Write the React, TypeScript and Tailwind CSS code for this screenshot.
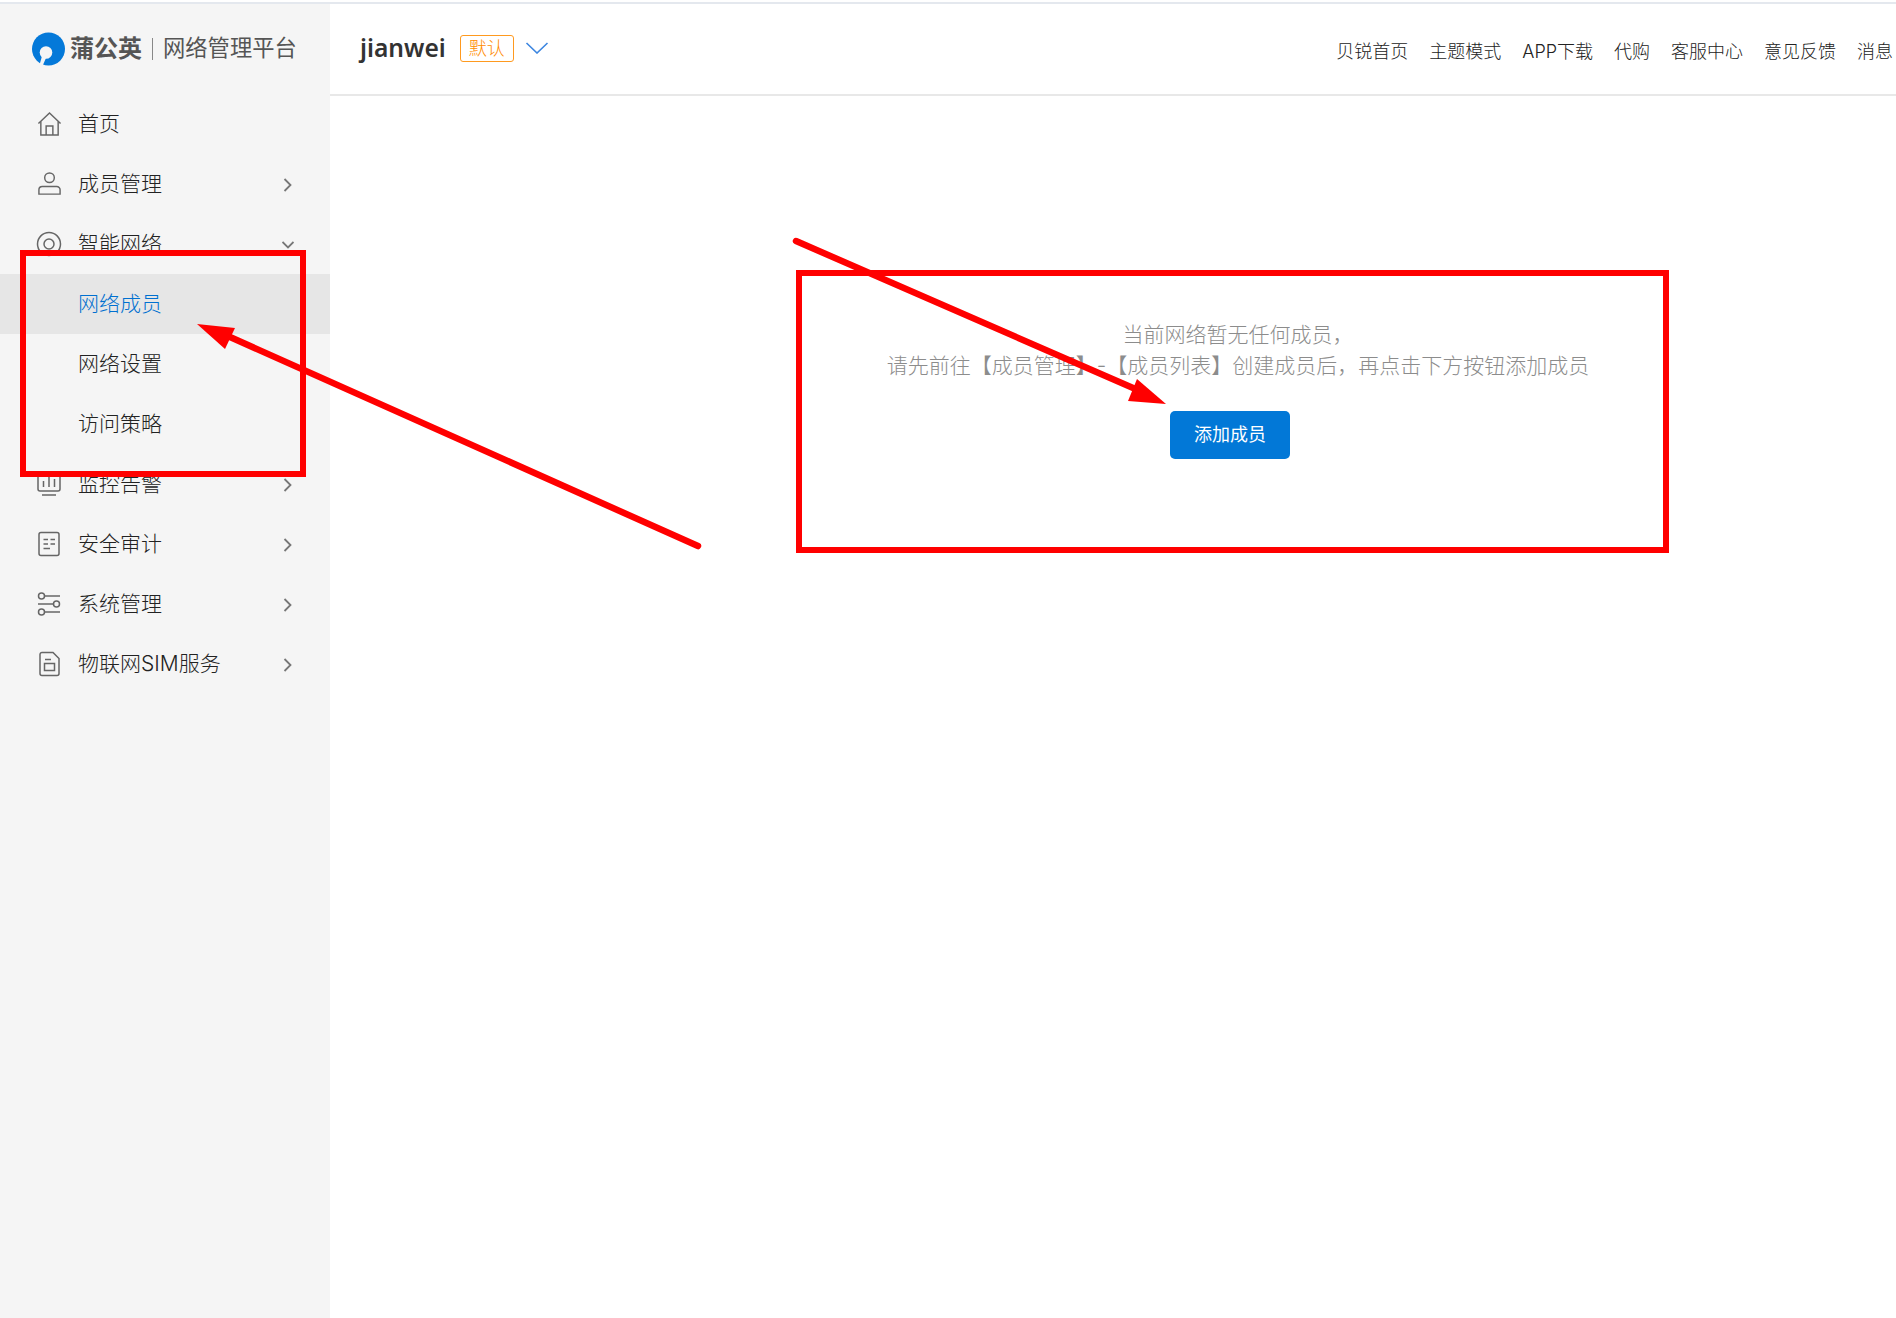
import React from "react";

const FONT = "font-['Inter','Noto_Sans_CJK_SC','Noto_Sans',sans-serif]";

function Chevron({ down }: { down?: boolean }) {
  return (
    <svg width="12" height="16" viewBox="0 0 12 16" fill="none" stroke="#777" strokeWidth="1.8" className="shrink-0 mt-[2px]">
      {down ? <path d="M0.5 5 L6 10.5 L11.5 5" /> : <path d="M2.5 2 L8.5 8 L2.5 14" />}
    </svg>
  );
}

const stroke = { fill: "none", stroke: "#666", strokeWidth: 1.5 };

const icons: Record<string, React.ReactNode> = {
  home: (
    <svg width="25" height="26" viewBox="0 0 26 26" {...stroke}>
      <path d="M1.5 12.5 L13 1.5 L24.5 12.5" />
      <path d="M4 10.5 V24.5 H22 V10.5" />
      <path d="M9.5 24.5 V15 H16.5 V24.5" />
    </svg>
  ),
  user: (
    <svg width="25" height="26" viewBox="0 0 26 26" {...stroke}>
      <circle cx="13" cy="6.5" r="5" />
      <path d="M5.5 15.5 H20.5 A3.5 3.5 0 0 1 24 19 V23.5 H2 V19 A3.5 3.5 0 0 1 5.5 15.5 Z" />
    </svg>
  ),
  net: (
    <svg width="26" height="26" viewBox="0 0 26 26" {...stroke}>
      <circle cx="13" cy="13" r="11.5" />
      <circle cx="13" cy="13" r="5" />
    </svg>
  ),
  monitor: (
    <svg width="26" height="26" viewBox="0 0 26 26" {...stroke}>
      <path d="M2 2 V18 A2 2 0 0 0 4 20 H22 A2 2 0 0 0 24 18 V2 Z" />
      <path d="M7.5 10 V16 M13 6 V16 M18.5 8 V16 M6 24 H20" />
    </svg>
  ),
  audit: (
    <svg width="24" height="26" viewBox="0 0 24 26" {...stroke}>
      <rect x="2" y="1.5" width="20" height="23" rx="2" />
      <path d="M6.5 8.5 H11 M13.5 8.5 H18 M6.5 13 H11 M13.5 13 H18 M6.5 17.5 H13" />
    </svg>
  ),
  system: (
    <svg width="24" height="26" viewBox="0 0 24 26" {...stroke}>
      <circle cx="4.5" cy="5" r="3" />
      <path d="M8 5 H23" />
      <path d="M1 13 H16" />
      <circle cx="19.5" cy="13" r="3" />
      <circle cx="4.5" cy="21" r="3" />
      <path d="M8 21 H23" />
    </svg>
  ),
  sim: (
    <svg width="24" height="26" viewBox="0 0 24 26" {...stroke}>
      <path d="M5 1.5 H16 L22 7.5 V22.5 A2 2 0 0 1 20 24.5 H5 A2 2 0 0 1 3 22.5 V3.5 A2 2 0 0 1 5 1.5 Z" />
      <path d="M8 8.5 H14" />
      <rect x="7.5" y="12.5" width="10" height="7" />
    </svg>
  ),
};

type Item = { label: string; icon?: string; arrow?: "right" | "down"; active?: boolean };

const menu: Item[] = [
  { label: "首页", icon: "home" },
  { label: "成员管理", icon: "user", arrow: "right" },
  { label: "智能网络", icon: "net", arrow: "down" },
  { label: "网络成员", active: true },
  { label: "网络设置" },
  { label: "访问策略" },
  { label: "监控告警", icon: "monitor", arrow: "right" },
  { label: "安全审计", icon: "audit", arrow: "right" },
  { label: "系统管理", icon: "system", arrow: "right" },
  { label: "物联网SIM服务", icon: "sim", arrow: "right" },
];

const links = ["贝锐首页", "主题模式", "APP下载", "代购", "客服中心", "意见反馈", "消息"];

function Annotations() {
  return (
    <svg width="1896" height="1318" className="absolute left-0 top-0 pointer-events-none">
      <rect x="23" y="253" width="280" height="221" fill="none" stroke="#ff0000" strokeWidth="6" />
      <rect x="799" y="273" width="867" height="277" fill="none" stroke="#ff0000" strokeWidth="6" />
      <path d="M698 546 L230 337" stroke="#ff0000" strokeWidth="6.5" strokeLinecap="round" fill="none" />
      <polygon points="197,324 235,328 225,349" fill="#ff0000" />
      <path d="M796 241 L1140 391" stroke="#ff0000" strokeWidth="6.5" strokeLinecap="round" fill="none" />
      <polygon points="1166,404 1137,379 1128,401" fill="#ff0000" />
    </svg>
  );
}

export default function App() {
  return (
    <div className={`relative w-[1896px] h-[1318px] overflow-hidden bg-white pt-[2px] ${FONT}`}>
      <div className="h-[2px] bg-[#e4e8ee]" />
      <div className="flex h-[1314px]">
        <aside className="w-[330px] shrink-0 bg-[#f5f5f5]">
          <div className="h-[90px] flex items-center pl-[32px]">
            <svg width="33" height="34" viewBox="0 0 33 34" className="shrink-0">
              <circle cx="16.5" cy="17" r="16.5" fill="#0479d9" />
              <circle cx="14" cy="20.5" r="6.3" fill="#f5f5f5" />
              <path d="M10 24 L7.5 33 L10.5 34 L14 26 Z" fill="#f5f5f5" />
            </svg>
            <span className="ml-[5px] text-[24px] leading-none font-bold text-[#555] whitespace-nowrap">蒲公英</span>
            <span className="ml-[10px] w-[1px] h-[22px] bg-[#888]" />
            <span className="ml-[10px] -mt-[1px] text-[22.3px] leading-none text-[#555] whitespace-nowrap">网络管理平台</span>
          </div>
          <nav className="flex flex-col">
            {menu.map((m) => (
              <div
                key={m.label}
                className={`h-[60px] flex items-center pr-[36px] ${m.active ? "bg-[#e6e6e6]" : ""}`}
              >
                <span className="w-[78px] shrink-0 flex justify-center pl-[28px] pr-[8px]">
                  {m.icon ? icons[m.icon] : null}
                </span>
                <span className={`flex-1 -mt-[1px] text-[21px] leading-none whitespace-nowrap font-light ${m.active ? "text-[#0070d0]" : "text-[#222]"}`}>
                  {m.label}
                </span>
                {m.arrow ? <Chevron down={m.arrow === "down"} /> : null}
              </div>
            ))}
          </nav>
        </aside>
        <div className="flex-1 min-w-0 flex flex-col">
          <header className="h-[92px] shrink-0 border-b-2 border-[#e8e8e8] flex items-center justify-between pl-[30px] pr-[3px]">
            <div className="flex items-center -mt-[2px]">
              <span className="font-['Noto_Sans',sans-serif] text-[24.6px] leading-none font-semibold text-[#333]">jianwei</span>
              <span className="ml-[14px] mt-[1px] w-[54px] h-[27px] flex items-center justify-center border border-[#ff9a1f] rounded-[3px] text-[18px] leading-none text-[#ff8a00] font-light">
                默认
              </span>
              <svg width="24" height="12" viewBox="0 0 24 12" fill="none" stroke="#3d86e0" strokeWidth="1.6" className="ml-[11px]">
                <path d="M1.5 1 L12 11 L22.5 1" />
              </svg>
            </div>
            <div className="flex items-center gap-[21px] mt-[6px] text-[18px] leading-none text-[#222] font-light whitespace-nowrap">
              {links.map((l) => (
                <span key={l}>{l}</span>
              ))}
            </div>
          </header>
          <main className="w-[1800px] flex flex-col items-center pt-[223px]">
            <div className="ml-[16px] text-center text-[21px] leading-[31px] text-[#8c8c8c] font-light whitespace-nowrap">
              <p>当前网络暂无任何成员，</p>
              <p>请先前往【成员管理】-【成员列表】创建成员后，再点击下方按钮添加成员</p>
            </div>
            <button className={`mt-[30px] w-[120px] h-[48px] rounded-[5px] bg-[#0278d7] text-white text-[18px] leading-none ${FONT}`}>
              添加成员
            </button>
          </main>
        </div>
      </div>
      <Annotations />
    </div>
  );
}
